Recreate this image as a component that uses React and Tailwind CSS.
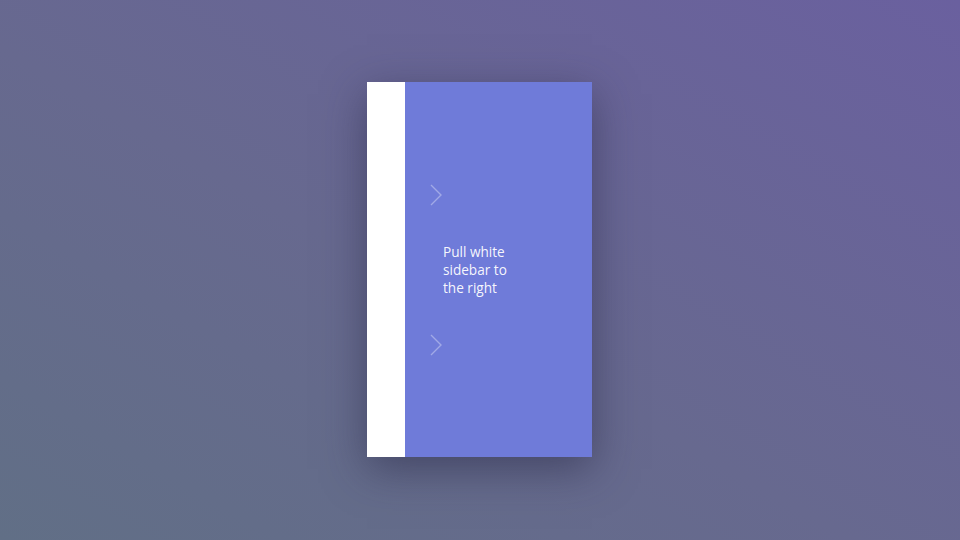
import React from "react";

function Chevron() {
  return (
    <svg width="12" height="22" viewBox="0 0 12 22" fill="none" className="block">
      <polyline points="1,1 11,11 1,21" stroke="rgba(255,255,255,0.35)" strokeWidth="1.4" />
    </svg>
  );
}

export default function App() {
  return (
    <div
      className="w-[960px] h-[540px] flex items-center justify-center bg-[linear-gradient(30deg,#616f86_0%,#67698f_45%,#6a609f_100%)]"
      style={{ fontFamily: '"Open Sans", "Noto Sans", sans-serif' }}
    >
      <div className="flex w-[225px] h-[375px] ml-[-1px] mb-[2px] shadow-[0_12px_40px_rgba(40,40,70,0.55)]">
        <div className="w-[38px] h-full bg-white" />
        <div className="flex-1 h-full bg-[#6f7bd9] flex flex-col justify-center items-start pl-[25px] pt-[2px] gap-[37px]">
          <Chevron />
          <div className="ml-[13px] text-[13.6px] leading-[18px] text-white/95">
            Pull white
            <br />
            sidebar to
            <br />
            the right
          </div>
          <Chevron />
        </div>
      </div>
    </div>
  );
}
